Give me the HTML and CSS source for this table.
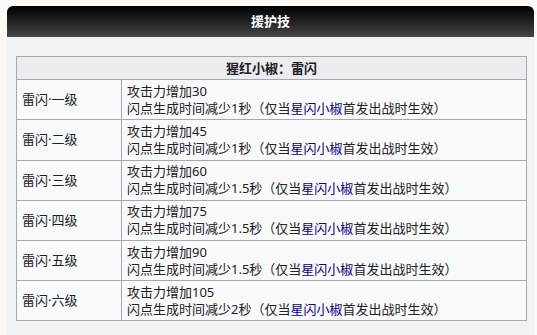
FILE: index.html
```html
<!DOCTYPE html>
<html lang="zh">
<head>
<meta charset="utf-8">
<link rel="stylesheet" href="styles.css">
</head>
<body>
<div class="panel">
  <div class="panel-title">援护技</div>
  <div class="panel-body">
    <table class="wikitable">
      <tr><th colspan="2">猩红小椒：雷闪</th></tr>
      <tr><td class="lv">雷闪·一级</td><td>攻击力增加30<br>闪点生成时间减少1秒（仅当<a class="lk">星闪小椒</a>首发出战时生效）</td></tr>
      <tr><td class="lv">雷闪·二级</td><td>攻击力增加45<br>闪点生成时间减少1秒（仅当<a class="lk">星闪小椒</a>首发出战时生效）</td></tr>
      <tr><td class="lv">雷闪·三级</td><td>攻击力增加60<br>闪点生成时间减少1.5秒（仅当<a class="lk">星闪小椒</a>首发出战时生效）</td></tr>
      <tr><td class="lv">雷闪·四级</td><td>攻击力增加75<br>闪点生成时间减少1.5秒（仅当<a class="lk">星闪小椒</a>首发出战时生效）</td></tr>
      <tr><td class="lv">雷闪·五级</td><td>攻击力增加90<br>闪点生成时间减少1.5秒（仅当<a class="lk">星闪小椒</a>首发出战时生效）</td></tr>
      <tr><td class="lv">雷闪·六级</td><td>攻击力增加105<br>闪点生成时间减少2秒（仅当<a class="lk">星闪小椒</a>首发出战时生效）</td></tr>
    </table>
  </div>
</div>
</body>
</html>
```
FILE: styles.css
```css
html, body {
  margin: 0;
  padding: 0;
  background: #fbf8f6;
  font-family: "Noto Sans", "Noto Sans CJK SC", sans-serif;
  color: #202122;
}
.panel {
  margin: 6px 0 0 7px;
  width: 527px;
}
.panel-title {
  height: 31px;
  line-height: 31px;
  border-radius: 6px 6px 0 0;
  background: linear-gradient(to bottom, #000 0%, #1a1a1a 40%, #474747 100%);
  color: #fff;
  font-weight: bold;
  font-size: 13px;
  text-align: center;
}
.panel-body {
  background: #eff3f4;
  padding: 19px 8px 20px 9px;
}
.wikitable {
  width: 511px;
  border-collapse: collapse;
  background: #f8f9fa;
  font-size: 13px;
  line-height: 17px;
}
.wikitable th, .wikitable td {
  border: 1px solid #a2a9b1;
  padding: 2.6px 5px;
  text-align: left;
  vertical-align: middle;
}
.wikitable th {
  background: #eaecf0;
  font-weight: bold;
  text-align: center;
}
.wikitable td.lv {
  width: 94px;
}
.lk {
  color: #0b0080;
  text-decoration: none;
}
```
